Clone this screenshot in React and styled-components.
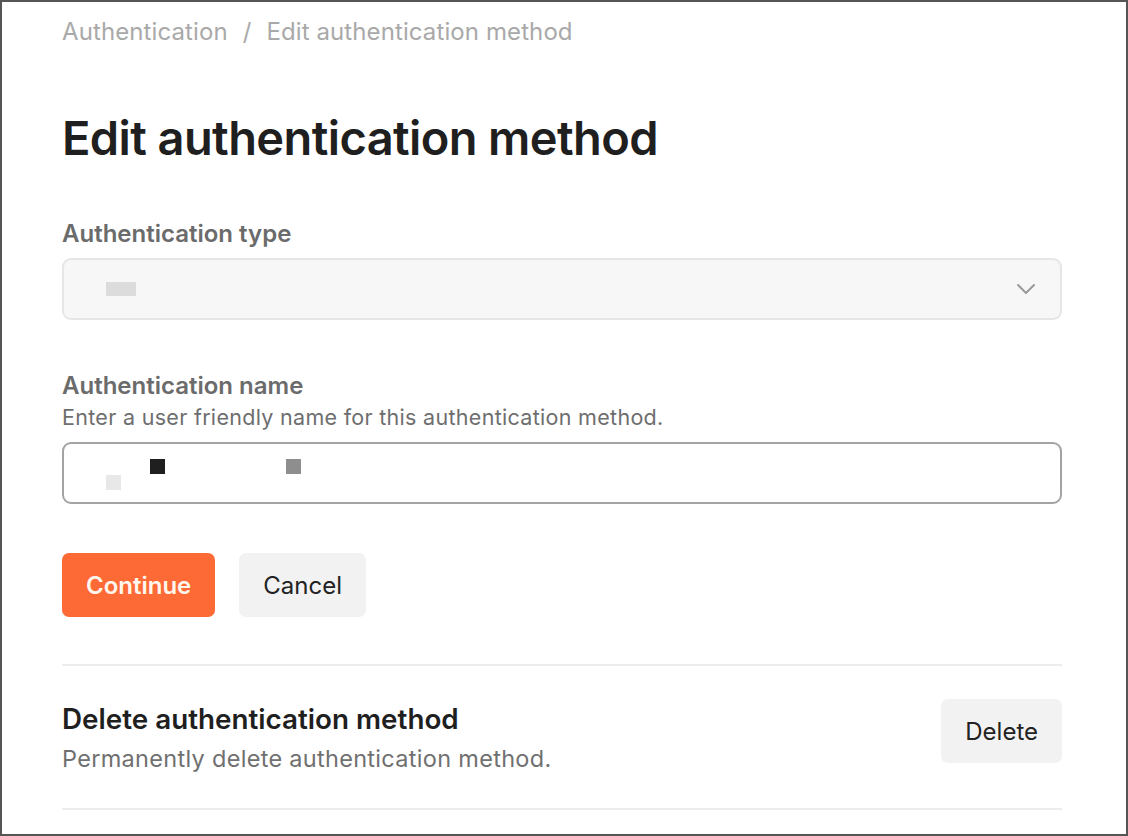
import styled, { createGlobalStyle } from "styled-components";

const GlobalStyle = createGlobalStyle`
  html, body {
    margin: 0;
    padding: 0;
    background: #ffffff;
  }
  body {
    font-family: Inter, "Noto Sans", "Liberation Sans", sans-serif;
    color: #1f1f1f;
  }
`;

const Frame = styled.div`
  box-sizing: border-box;
  width: 1128px;
  height: 836px;
  border: 2px solid #555555;
  overflow: hidden;
  background: #fff;
`;

const Page = styled.main`
  width: 1000px;
  padding: 14px 0 0 60px;
`;

const Breadcrumb = styled.nav`
  display: flex;
  align-items: center;
  gap: 15px;
  font-size: 24px;
  line-height: 32px;
  letter-spacing: 0.1px;
  color: #a9a9a9;
`;

const Title = styled.h1`
  margin: 62px 0 0;
  font-size: 47px;
  line-height: 56px;
  font-weight: 600;
  letter-spacing: -0.6px;
  color: #1f1f1f;
`;

const Field = styled.div`
  margin-top: ${(p) => p.$top}px;
  display: flex;
  flex-direction: column;
`;

const Label = styled.label`
  font-size: 24px;
  line-height: 32px;
  font-weight: 600;
  color: #6b6b6b;
`;

const Hint = styled.div`
  font-size: 21.5px;
  line-height: 30px;
  color: #6e6e6e;
  letter-spacing: 0.3px;
`;

const SelectBox = styled.div`
  box-sizing: border-box;
  margin-top: 8px;
  height: 62px;
  width: 1000px;
  display: flex;
  align-items: center;
  justify-content: space-between;
  padding: 0 24px 0 42px;
  background: #f7f7f7;
  border: 2px solid #e6e6e6;
  border-radius: 9px;
`;

const Placeholder = styled.span`
  display: block;
  width: 30px;
  height: 14px;
  background: #dcdcdc;
`;

const InputBox = styled.div`
  box-sizing: border-box;
  margin-top: 10px;
  height: 62px;
  width: 1000px;
  position: relative;
  background: #fff;
  border: 2px solid #a3a3a3;
  border-radius: 9px;
`;

const Pixel = styled.span`
  position: absolute;
  width: 15px;
  height: 15px;
  background: ${(p) => p.$color};
`;

const Actions = styled.div`
  display: flex;
  gap: 24px;
  margin-top: 49px;
`;

const Button = styled.button`
  box-sizing: border-box;
  height: 64px;
  padding: 0 24px;
  border: none;
  border-radius: 7px;
  font-family: inherit;
  font-size: 24px;
  font-weight: ${(p) => (p.$primary ? 600 : 400)};
  background: ${(p) => (p.$primary ? "#fe6a35" : "#f2f2f2")};
  color: ${(p) => (p.$primary ? "#fff6ee" : "#222222")};
  cursor: pointer;
`;

const Divider = styled.hr`
  margin: ${(p) => p.$top}px 0 0;
  border: none;
  border-top: 2px solid #ededed;
  width: 1000px;
`;

const DangerRow = styled.section`
  display: flex;
  align-items: flex-start;
  justify-content: space-between;
  padding: 33px 0 34px;
`;

const DangerText = styled.div`
  display: flex;
  flex-direction: column;
  gap: 7px;
  padding-top: 2px;
`;

const DangerTitle = styled.h2`
  margin: 0;
  font-size: 27.8px;
  line-height: 36px;
  font-weight: 600;
  color: #1f1f1f;
`;

const DangerHint = styled.p`
  margin: 0;
  font-size: 23.5px;
  line-height: 30px;
  color: #707070;
  letter-spacing: 0.3px;
`;

const Chevron = () => (
  <svg width="20" height="12" viewBox="0 0 20 12" fill="none">
    <path d="M2 2l8 8 8-8" stroke="#9a9a9a" strokeWidth="2" strokeLinecap="round" strokeLinejoin="round" />
  </svg>
);

export default function App() {
  return (
    <Frame>
      <GlobalStyle />
      <Page>
        <Breadcrumb>
          <span>Authentication</span>
          <span>/</span>
          <span>Edit authentication method</span>
        </Breadcrumb>
        <Title>Edit authentication method</Title>

        <Field $top={52}>
          <Label>Authentication type</Label>
          <SelectBox>
            <Placeholder />
            <Chevron />
          </SelectBox>
        </Field>

        <Field $top={50}>
          <Label>Authentication name</Label>
          <Hint>Enter a user friendly name for this authentication method.</Hint>
          <InputBox>
            <Pixel $color="#e8e8e8" style={{ left: 42, top: 31 }} />
            <Pixel $color="#1f1f1f" style={{ left: 86, top: 15 }} />
            <Pixel $color="#8e8e8e" style={{ left: 222, top: 15 }} />
          </InputBox>
        </Field>

        <Actions>
          <Button $primary>Continue</Button>
          <Button>Cancel</Button>
        </Actions>

        <Divider $top={47} />
        <DangerRow>
          <DangerText>
            <DangerTitle>Delete authentication method</DangerTitle>
            <DangerHint>Permanently delete authentication method.</DangerHint>
          </DangerText>
          <Button>Delete</Button>
        </DangerRow>
        <Divider $top={0} />
      </Page>
    </Frame>
  );
}
